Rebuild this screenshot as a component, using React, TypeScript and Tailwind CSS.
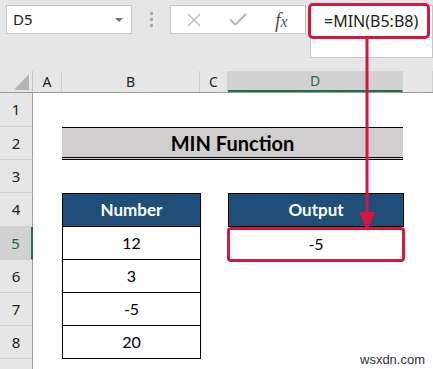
import { X, Check } from 'lucide-react';

const COLS = [
  { key: 'A', w: 'w-[29px]' },
  { key: 'B', w: 'w-[138px]' },
  { key: 'C', w: 'w-[28px]' },
  { key: 'D', w: 'w-[175px]' },
  { key: 'E', w: 'flex-1' },
];

const ROWS = [
  { n: 1, h: 'h-[34px]' },
  { n: 2, h: 'h-[33px]' },
  { n: 3, h: 'h-[33px]' },
  { n: 4, h: 'h-[34px]' },
  { n: 5, h: 'h-[33px]' },
  { n: 6, h: 'h-[33px]' },
  { n: 7, h: 'h-[33px]' },
  { n: 8, h: 'h-[33px]' },
  { n: 9, h: 'h-[33px]' },
];

const numbers: Record<number, string> = { 5: '12', 6: '3', 7: '-5', 8: '20' };

const cellFont = 'font-["Lato","Liberation_Sans",sans-serif]';

function RowCells({ n }: { n: number }) {
  if (n === 2) {
    return (
      <>
        <div className="w-[29px]" />
        <div className={`w-[341px] h-full flex items-center justify-center bg-[#d0cece] border-t border-black border-b-[3px] border-b-black [border-bottom-style:double] text-[20px] font-bold text-black ${cellFont}`}>
          MIN Function
        </div>
      </>
    );
  }
  if (n === 4) {
    return (
      <>
        <div className="w-[29px]" />
        <div className={`w-[139px] h-full flex items-center justify-center bg-[#1f4e78] border border-black text-white text-[17px] font-bold ${cellFont}`}>
          Number
        </div>
        <div className="w-[27px]" />
        <div className={`w-[176px] h-full flex items-center justify-center bg-[#1f4e78] border border-black text-white text-[17px] font-bold ${cellFont}`}>
          Output
        </div>
      </>
    );
  }
  if (numbers[n]) {
    return (
      <>
        <div className="w-[29px]" />
        <div className={`w-[139px] h-full flex items-center justify-center bg-white border-x border-b border-black text-black text-[16px] ${cellFont}`}>
          {numbers[n]}
        </div>
        <div className="w-[27px]" />
        {n === 5 && (
          <div className={`w-[176px] h-full flex items-center justify-center text-black text-[16px] ${cellFont}`}>
            -5
          </div>
        )}
      </>
    );
  }
  return null;
}

export default function App() {
  return (
    <div className="relative w-[433px] h-[369px] overflow-hidden bg-white font-['Noto_Sans',sans-serif]">
      {/* ribbon / formula bar */}
      <div className="h-[71px] bg-[#e6e6e6] pt-[5px] flex items-start">
        <div className="ml-[6px] w-[126px] h-[29px] bg-white border border-[#c6c6c6] flex items-center justify-between pl-[6px] pr-[8px]">
          <span className="text-[15px] text-[#222]">D5</span>
          <span className="w-0 h-0 border-x-[4px] border-x-transparent border-t-[4px] border-t-[#777]" />
        </div>
        <div className="w-[38px] h-[29px] flex flex-col items-center justify-center gap-[3px]">
          <span className="w-[3px] h-[3px] bg-[#aaa]" />
          <span className="w-[3px] h-[3px] bg-[#aaa]" />
          <span className="w-[3px] h-[3px] bg-[#aaa]" />
        </div>
        <div className="w-[136px] h-[29px] bg-white border border-[#c6c6c6] flex items-center pl-[12px]">
          <X className="w-[22px] h-[22px] text-[#b3b3b3]" strokeWidth={1.3} />
          <Check className="ml-[22px] w-[22px] h-[22px] text-[#b3b3b3]" strokeWidth={2} />
          <span className="ml-[26px] font-['Liberation_Serif',serif] italic text-[20px] text-[#555] leading-none">
            f<span className="text-[16px]">x</span>
          </span>
        </div>
        <div className="ml-[4px] flex-1 h-[53px] bg-white border border-[#c6c6c6]" />
      </div>

      {/* column headers */}
      <div className="h-[22px] flex bg-[#e6e6e6] border-b border-[#9b9b9b]">
        <div className="w-[33px] h-full relative border-r border-[#c6c6c6]">
          <div className="absolute right-[3px] bottom-[2px] w-0 h-0 border-l-[15px] border-l-transparent border-b-[16px] border-b-[#b4b4b4]" />
        </div>
        {COLS.map((c) => (
          <div
            key={c.key}
            className={`${c.w} h-full flex items-center justify-center text-[14px] border-r border-[#cfcfcf] ${
              c.key === 'D' ? 'bg-[#d2d2d2] text-[#1e6b41] border-b-2 border-b-[#217346]' : 'text-[#222]'
            }`}
          >
            {c.key === 'E' ? '' : c.key}
          </div>
        ))}
      </div>

      {/* rows */}
      {ROWS.map((r) => (
        <div key={r.n} className={`${r.h} flex`}>
          <div
            className={`w-[33px] shrink-0 h-full flex items-center justify-center text-[15px] border-b border-[#cfcfcf] ${
              r.n === 5
                ? 'bg-[#d2d2d2] text-[#1e6b41] border-r-2 border-r-[#217346]'
                : 'bg-[#e6e6e6] text-[#222] border-r border-r-[#9b9b9b]'
            }`}
          >
            {r.n < 9 ? r.n : ''}
          </div>
          <RowCells n={r.n} />
        </div>
      ))}

      {/* annotations */}
      <div className="absolute left-[308px] top-[3px] w-[122px] h-[36px] border-[3px] border-[#d7153f] rounded-[5px] bg-white flex items-center pl-[13px]">
        <span className="text-[16px] text-[#222]">=MIN(B5:B8)</span>
      </div>
      <svg className="absolute left-[355px] top-[39px]" width="24" height="194" viewBox="0 0 24 194">
        <line x1="12" y1="0" x2="12" y2="176" stroke="#d7153f" strokeWidth="3" />
        <polygon points="4,173 20,173 12,192" fill="#d7153f" />
      </svg>
      <div className="absolute left-[227px] top-[227px] w-[178px] h-[35px] border-[3px] border-[#d7153f] rounded-[4px]" />
      <div className="absolute left-[360px] top-[350px] text-[13px] text-[#333] font-['Liberation_Sans',sans-serif]">
        wsxdn.com
      </div>
    </div>
  );
}
